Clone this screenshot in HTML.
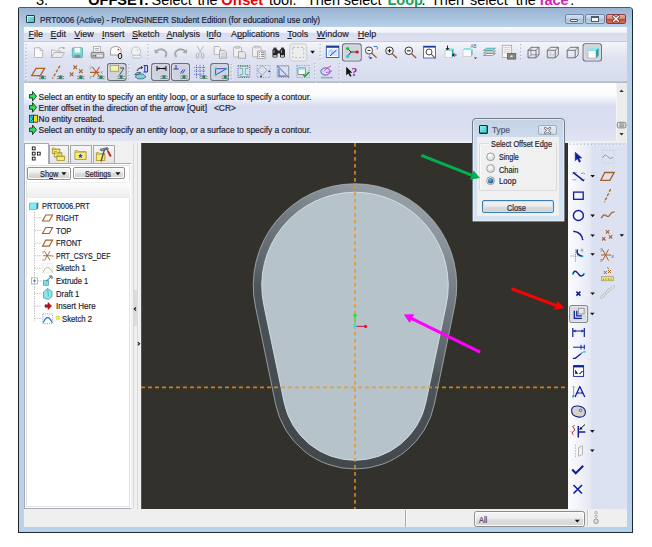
<!DOCTYPE html>
<html><head><meta charset="utf-8">
<style>
*{margin:0;padding:0;box-sizing:border-box}
html,body{width:652px;height:547px;overflow:hidden;background:#fff;font-family:"Liberation Sans",sans-serif}
.a{position:absolute}
.t{position:absolute;white-space:nowrap;line-height:10px;-webkit-text-stroke:0.18px currentColor}
#top span{position:absolute;white-space:nowrap;font-size:14.5px;line-height:14px;top:-7.4px;color:#000}
#top b{font-weight:bold}
#win{left:18px;top:7px;width:615px;height:526px;background:#b9d1ea;border:1px solid #1c2c34;border-top-color:#55595e;border-left-color:#222;border-radius:2px 4px 0 0;box-shadow:inset -1px -1px 0 #8ee4f4}
#title{left:19px;top:8px;width:613px;height:19px;background:linear-gradient(#99b4d2,#b8d0e8);border-radius:1px 3px 0 0}
.menu span{position:absolute;top:29px;font-size:9px;line-height:10px;color:#1a1a2a;-webkit-text-stroke:0.15px currentColor}
.menu u{text-decoration:underline;text-underline-offset:1px}
.msg{font-size:8.4px;color:#222;line-height:10px}
.tree span.tx{position:absolute;font-size:8.6px;line-height:10px;color:#1e1e1e;white-space:nowrap}
</style></head><body>

<!-- cropped instruction text -->
<div id="top" class="a" style="left:0;top:0;width:652px;height:7px;overflow:hidden">
<span style="left:36px">3.</span>
<span style="left:88.3px"><b>OFFSET:</b></span>
<span style="left:151.5px">Select</span>
<span style="left:197.5px">the</span>
<span style="left:221.3px;color:#e00"><b>Offset</b></span>
<span style="left:269px">tool.</span>
<span style="left:306.9px">Then</span>
<span style="left:343.7px">select</span>
<span style="left:387.5px;color:#1aa05a"><b>Loop</b></span>
<span style="left:421.5px">.</span>
<span style="left:431px">Then</span>
<span style="left:469.9px">select</span>
<span style="left:515.7px">the</span>
<span style="left:539.6px;color:#d21fb4"><b>face</b></span>
<span style="left:570.3px">.</span>
</div>

<!-- window frame -->
<div id="win" class="a"></div>
<div id="title" class="a"></div>
<div class="a" style="left:26px;top:15px;width:9px;height:8px;background:linear-gradient(135deg,#7ee8e8,#3cc6c8);border:1px solid #2a3a40;border-radius:1px;box-shadow:inset 1px 1px 0 #b8f4f4"></div>
<div class="t" style="left:39.5px;top:15.2px;font-size:9px;color:#1a2035;transform:scaleX(0.905);transform-origin:0 0">PRT0006 (Active) - Pro/ENGINEER Student Edition (for educational use only)</div>
<div class="a" style="left:565px;top:14px;width:19px;height:10px;border:1px solid #7088a4;border-radius:2px;background:linear-gradient(#d6e2ef 0%,#bccfe3 45%,#a3bcd6 50%,#c2d5e8 100%)"></div>
<div class="a" style="left:570px;top:19px;width:8px;height:3px;border:1px solid #4a5a6e;background:#f4f6f8;border-radius:1px"></div>
<div class="a" style="left:585px;top:14px;width:20px;height:10px;border:1px solid #7088a4;border-radius:2px;background:linear-gradient(#d6e2ef 0%,#bccfe3 45%,#a3bcd6 50%,#c2d5e8 100%)"></div>
<div class="a" style="left:591px;top:16px;width:8px;height:6px;border:1px solid #4a5a6e;background:#f4f6f8;border-top:2px solid #4a5a6e"></div>
<div class="a" style="left:606px;top:14px;width:20px;height:10px;border:1px solid #8a4040;border-radius:2px;background:linear-gradient(#eab0a4 0%,#d9806c 45%,#c4452e 52%,#d8735c 100%)"></div>
<svg class="a" style="left:611px;top:15px" width="10" height="8" viewBox="0 0 10 8"><path d="M2.6 1.5L7.4 6.3M7.4 1.5L2.6 6.3" stroke="#6a3030" stroke-width="2.8" stroke-linecap="round"/><path d="M2.6 1.5L7.4 6.3M7.4 1.5L2.6 6.3" stroke="#fff" stroke-width="1.5" stroke-linecap="round"/></svg>
<!-- client -->
<div class="a" style="left:24px;top:27px;width:603px;height:500px;background:#f0f0f0"></div>
<!-- menu bar -->
<div class="a" style="left:24px;top:27px;width:603px;height:14px;background:linear-gradient(#fbfbfd 0%,#f3f4f9 38%,#d8dcee 45%,#dde2f1 100%)"></div>
<div class="menu">
<span style="left:28.5px"><u>F</u>ile</span>
<span style="left:50.5px"><u>E</u>dit</span>
<span style="left:74.3px"><u>V</u>iew</span>
<span style="left:102px"><u>I</u>nsert</span>
<span style="left:132px"><u>S</u>ketch</span>
<span style="left:166.5px"><u>A</u>nalysis</span>
<span style="left:206.3px">I<u>n</u>fo</span>
<span style="left:231px">A<u>p</u>plications</span>
<span style="left:287.3px"><u>T</u>ools</span>
<span style="left:316.8px"><u>W</u>indow</span>
<span style="left:357.8px"><u>H</u>elp</span>
</div>
<!-- toolbar area -->
<div class="a" style="left:24px;top:41px;width:603px;height:41px;border-top:1px solid #c8ccd8;border-bottom:1px solid #c2c5ce;background:linear-gradient(#f5f6fb 0%,#dfe3f1 40%,#d7dcee 100%)"></div>
<!-- message area -->
<div class="a" style="left:24px;top:82px;width:603px;height:59px;border-top:1px solid #b9bcc4;background:linear-gradient(#fefefe 0%,#fbfcfd 20%,#e6e9f5 33%,#d8ddef 40%,#d8ddef 70%,#e0e4f3 100%)"></div>
<!-- graphics -->
<div class="a" style="left:141px;top:143px;width:427px;height:366px;background:#33312c;overflow:hidden">
<svg width="427" height="366" viewBox="141 143 427 366" style="position:absolute;left:0;top:0">
<defs>
<linearGradient id="ring" gradientUnits="userSpaceOnUse" x1="356.8" y1="180.4" x2="239.8" y2="411.8">
<stop offset="0" stop-color="#939da3"/><stop offset="0.19" stop-color="#788187"/><stop offset="0.29" stop-color="#6e777d"/><stop offset="0.47" stop-color="#5c646a"/><stop offset="0.54" stop-color="#4e555a"/><stop offset="0.77" stop-color="#474d52"/><stop offset="1" stop-color="#43484c"/>
</linearGradient>
</defs>
<rect x="141" y="143" width="1" height="366" fill="#55544f"/>
<path d="M255.36 306.10A101.75 101.75 0 1 1 454.64 306.10L434.32 404.40A81 81 0 0 1 275.68 404.40Z" fill="url(#ring)" stroke="#aab3b8" stroke-width="0.8"/>
<path d="M263.72 304.56A93.25 93.25 0 1 1 446.28 304.56L425.77 402.78A72.3 72.3 0 0 1 284.23 402.78Z" fill="#b7c3cb" stroke="#d9e2e8" stroke-width="0.9"/>
<line x1="355" y1="143" x2="355" y2="509" stroke="#ed941a" stroke-opacity="0.8" stroke-width="1.8" stroke-dasharray="3.7 3.3"/>
<line x1="141" y1="387.3" x2="568" y2="387.3" stroke="#ed941a" stroke-opacity="0.8" stroke-width="1.8" stroke-dasharray="4 3"/>
<line x1="355" y1="315.6" x2="355" y2="326.4" stroke="#3fe05a" stroke-width="1.2"/>
<circle cx="355" cy="315.6" r="1.8" fill="#1ee83a"/>
<line x1="356" y1="326.4" x2="365.6" y2="326.4" stroke="#e8204a" stroke-width="1.2"/>
<circle cx="365.6" cy="326.4" r="1.6" fill="#f0103a"/>
<circle cx="354.8" cy="326.4" r="1.8" fill="#20e8f0"/>
</svg>
</div>

<svg class="a" style="left:0;top:0" width="652" height="90" viewBox="0 0 652 90">
<rect x="25.5" y="44" width="1.2" height="1.2" fill="#aeb3c0"/>
<rect x="26.5" y="45.2" width="1" height="1" fill="#fff"/>
<rect x="25.5" y="47.6" width="1.2" height="1.2" fill="#aeb3c0"/>
<rect x="26.5" y="48.800000000000004" width="1" height="1" fill="#fff"/>
<rect x="25.5" y="51.2" width="1.2" height="1.2" fill="#aeb3c0"/>
<rect x="26.5" y="52.400000000000006" width="1" height="1" fill="#fff"/>
<rect x="25.5" y="54.800000000000004" width="1.2" height="1.2" fill="#aeb3c0"/>
<rect x="26.5" y="56.00000000000001" width="1" height="1" fill="#fff"/>
<rect x="25.5" y="58.400000000000006" width="1.2" height="1.2" fill="#aeb3c0"/>
<rect x="26.5" y="59.60000000000001" width="1" height="1" fill="#fff"/>
<rect x="25.5" y="62.00000000000001" width="1.2" height="1.2" fill="#aeb3c0"/>
<rect x="26.5" y="63.20000000000001" width="1" height="1" fill="#fff"/>
<rect x="25.5" y="65.60000000000001" width="1.2" height="1.2" fill="#aeb3c0"/>
<rect x="26.5" y="66.80000000000001" width="1" height="1" fill="#fff"/>
<rect x="25.5" y="69.2" width="1.2" height="1.2" fill="#aeb3c0"/>
<rect x="26.5" y="70.4" width="1" height="1" fill="#fff"/>
<rect x="25.5" y="72.8" width="1.2" height="1.2" fill="#aeb3c0"/>
<rect x="26.5" y="74.0" width="1" height="1" fill="#fff"/>
<rect x="25.5" y="76.39999999999999" width="1.2" height="1.2" fill="#aeb3c0"/>
<rect x="26.5" y="77.6" width="1" height="1" fill="#fff"/>
<rect x="25.5" y="79.99999999999999" width="1.2" height="1.2" fill="#aeb3c0"/>
<rect x="26.5" y="81.19999999999999" width="1" height="1" fill="#fff"/>
<path d="M34.5 47.8h5.5l2.7 2.7v7h-8.2z" fill="#fafafa" stroke="#b4b4b4" stroke-width="0.9"/>
<path d="M40 47.8v2.7h2.7" fill="none" stroke="#b4b4b4" stroke-width="0.8"/>
<path d="M51.5 57.5v-7.5h3l1 1h5v1.5" fill="#f4f4f4" stroke="#b0b0b0" stroke-width="0.9"/>
<path d="M51.5 57.5l2.5-5h10.5l-3 5z" fill="#ececec" stroke="#b0b0b0" stroke-width="0.9"/>
<path d="M58 49.5c1.5-2 4-2.5 5.5-1.5" fill="none" stroke="#b0b0b0" stroke-width="0.9"/><circle cx="63.8" cy="48" r="0.9" fill="#a0a0a0"/>
<rect x="72.3" y="47.8" width="10.2" height="9.8" rx="0.8" fill="#6fdcdc" stroke="#5a9a9a" stroke-width="0.7"/>
<rect x="74.6" y="48" width="5.6" height="4.6" fill="#fafafa"/>
<rect x="74.3" y="55" width="6.2" height="2.5" fill="#8a8a8a"/>
<rect x="93.5" y="46.4" width="6.8" height="6" fill="#fff" stroke="#9a9a9a" stroke-width="0.7"/>
<path d="M94.8 48.5h4.2M94.8 50.2h4.2" stroke="#777" stroke-width="0.6"/>
<rect x="91.2" y="52.3" width="12.6" height="5.7" rx="1" fill="#c4c4c4" stroke="#6a6a6a" stroke-width="0.8"/>
<rect x="92.4" y="55" width="1.6" height="1.6" fill="#30c030"/><rect x="94.6" y="55" width="1.6" height="1.6" fill="#e02a2a"/><rect x="96.8" y="55" width="6" height="1.6" fill="#eaeaea"/>
<path d="M110.5 50.5q0-3.5 3.5-3.8h3.5q3.5.3 3.5 3.8v4.5h-10.5z" fill="#fff" stroke="#8a8a8a" stroke-width="0.8"/>
<circle cx="118.4" cy="49.6" r="0.9" fill="#e02020"/>
<ellipse cx="120" cy="56" rx="1.8" ry="2.8" fill="#ddd" stroke="#222" stroke-width="1"/>
<circle cx="136" cy="51.5" r="4.6" fill="#f2f3f6" stroke="#b8b8b8" stroke-width="0.8"/>
<ellipse cx="137" cy="56.6" rx="5" ry="1.5" fill="#f2f3f6" stroke="#b0b0b0" stroke-width="0.8"/><circle cx="137.5" cy="50" r="0.6" fill="#999"/>
<rect x="147.5" y="44" width="1.2" height="1.2" fill="#aeb3c0"/>
<rect x="148.5" y="45.2" width="1" height="1" fill="#fff"/>
<rect x="147.5" y="47.6" width="1.2" height="1.2" fill="#aeb3c0"/>
<rect x="148.5" y="48.800000000000004" width="1" height="1" fill="#fff"/>
<rect x="147.5" y="51.2" width="1.2" height="1.2" fill="#aeb3c0"/>
<rect x="148.5" y="52.400000000000006" width="1" height="1" fill="#fff"/>
<rect x="147.5" y="54.800000000000004" width="1.2" height="1.2" fill="#aeb3c0"/>
<rect x="148.5" y="56.00000000000001" width="1" height="1" fill="#fff"/>
<rect x="147.5" y="58.400000000000006" width="1.2" height="1.2" fill="#aeb3c0"/>
<rect x="148.5" y="59.60000000000001" width="1" height="1" fill="#fff"/>
<path d="M155.5 51.5q5.5-4.5 10 -0.2q2 3 -0.5 5.8" fill="none" stroke="#a8a8a8" stroke-width="1.8"/>
<path d="M154.3 49.3l0.6 4.5 4.2-1.2z" fill="#a8a8a8"/>
<path d="M186 51.5q-5.5-4.5 -10 -0.2q-2 3 0.5 5.8" fill="none" stroke="#a8a8a8" stroke-width="1.8"/>
<path d="M187.3 49.3l-0.6 4.5 -4.2-1.2z" fill="#a8a8a8"/>
<path d="M197.2 46.2l4.5 7.5M203.5 46.2l-4.5 7.5" stroke="#b0b0b0" stroke-width="0.9"/>
<rect x="196.3" y="53.5" width="2.5" height="4.5" rx="1.2" fill="none" stroke="#a8a8a8" stroke-width="0.9"/><rect x="201.3" y="53.5" width="2.5" height="4.5" rx="1.2" fill="none" stroke="#a8a8a8" stroke-width="0.9"/>
<path d="M214.2 46.5h4.5l1.8 1.8v6.3h-6.3z" fill="#f4f4f4" stroke="#aaa" stroke-width="0.8"/>
<path d="M219.5 50.3h4.8l2 2v5.8h-6.8z" fill="#e8e8e8" stroke="#999" stroke-width="0.8"/>
<path d="M221 53.5h4M221 55h4M221 56.5h4" stroke="#b8b8b8" stroke-width="0.6"/>
<rect x="233.5" y="47.2" width="8" height="9.8" rx="0.8" fill="#f0f0f0" stroke="#aaa" stroke-width="0.8"/>
<rect x="235.8" y="46.2" width="3.4" height="2" fill="#ddd" stroke="#aaa" stroke-width="0.6"/>
<path d="M238.5 51.6h5l2 2v4.6h-7z" fill="#e8e8e8" stroke="#999" stroke-width="0.8"/>
<rect x="252.6" y="46.8" width="8.5" height="10" rx="0.8" fill="#f0f0f0" stroke="#aaa" stroke-width="0.8"/>
<rect x="255" y="46" width="3.6" height="2" fill="#ddd" stroke="#aaa" stroke-width="0.6"/>
<rect x="257.6" y="51" width="7.5" height="7.4" fill="#f2f2f2" stroke="#999" stroke-width="0.8"/>
<path d="M258.8 52.6h1M261.2 52.6h3M258.8 54.5h1M261.2 54.5h3M258.8 56.4h1M261.2 56.4h3" stroke="#666" stroke-width="0.8"/>
<rect x="272.5" y="49" width="5" height="8.5" rx="1.2" fill="#222"/><rect x="280" y="49" width="5" height="8.5" rx="1.2" fill="#222"/>
<rect x="273.5" y="47.6" width="3" height="2" fill="#333"/><rect x="281" y="47.6" width="3" height="2" fill="#333"/><rect x="276.8" y="50.5" width="4" height="3" fill="#2a2a2a"/>
<rect x="273.4" y="55.2" width="3.2" height="1.6" fill="#ddd"/><rect x="280.9" y="55.2" width="3.2" height="1.6" fill="#ddd"/><rect x="273.5" y="50" width="1" height="3" fill="#999"/><rect x="281" y="50" width="1" height="3" fill="#999"/>
<rect x="289.8" y="43.8" width="17" height="17.2" rx="2.5" fill="#eeeeef" stroke="#c4c6cc" stroke-width="0.9"/>
<rect x="292.8" y="47.3" width="11" height="10.4" fill="none" stroke="#b0b0b0" stroke-width="0.9" stroke-dasharray="2.2 1.8"/>
<path d="M310.3 50.8h4.6l-2.3 3z" fill="#111"/>
<rect x="319.5" y="44" width="1.2" height="1.2" fill="#aeb3c0"/>
<rect x="320.5" y="45.2" width="1" height="1" fill="#fff"/>
<rect x="319.5" y="47.6" width="1.2" height="1.2" fill="#aeb3c0"/>
<rect x="320.5" y="48.800000000000004" width="1" height="1" fill="#fff"/>
<rect x="319.5" y="51.2" width="1.2" height="1.2" fill="#aeb3c0"/>
<rect x="320.5" y="52.400000000000006" width="1" height="1" fill="#fff"/>
<rect x="319.5" y="54.800000000000004" width="1.2" height="1.2" fill="#aeb3c0"/>
<rect x="320.5" y="56.00000000000001" width="1" height="1" fill="#fff"/>
<rect x="319.5" y="58.400000000000006" width="1.2" height="1.2" fill="#aeb3c0"/>
<rect x="320.5" y="59.60000000000001" width="1" height="1" fill="#fff"/>
<rect x="326.3" y="46" width="12.6" height="11.5" fill="#fff" stroke="#2a50b0" stroke-width="0.9"/>
<rect x="326.3" y="46" width="12.6" height="1.8" fill="#1e3c9a"/>
<path d="M328 49.5h9.5v6.5h-9.5z" fill="#cfe4f6"/><path d="M330 56l6.5-6" stroke="#2040c0" stroke-width="1"/><path d="M329.3 51l3 -1.5M331 53l2.5-1.4" stroke="#7aaee0" stroke-width="0.8"/>
<rect x="342.5" y="43.9" width="18.69999999999999" height="17.1" rx="2.2" fill="#cfd3de" stroke="#6a7079" stroke-width="1.1"/>
<rect x="343.6" y="45.0" width="16.49999999999999" height="14.900000000000002" rx="1.5" fill="none" stroke="#e2e5ee" stroke-width="0.8"/>
<path d="M347.6 48.6l3.4 3.4h6M351 52l-3.4 4.4" fill="none" stroke="#222" stroke-width="0.9"/>
<circle cx="347.6" cy="48.6" r="1.6" fill="#22c030"/><circle cx="357.2" cy="52" r="1.6" fill="#e01010"/><circle cx="347.6" cy="56.4" r="1.6" fill="#20d0d8"/>
<circle cx="369" cy="50.5" r="3.6" fill="#f6f6f6" stroke="#333" stroke-width="0.9"/><path d="M367.6 50.5h2.8" stroke="#222" stroke-width="0.9"/>
<path d="M371.8 53.2l4.8 4.6" stroke="#9a5a30" stroke-width="1.2"/>
<path d="M373.5 46.5h3.5q1 1.5 0 3M370 55.5q-2 1.5 -0.5 3" fill="none" stroke="#3a6ad0" stroke-width="0.9"/><circle cx="370.8" cy="58" r="1" fill="#1a3ac0"/>
<circle cx="389.5" cy="50.8" r="3.8" fill="#fafafa" stroke="#222" stroke-width="0.9"/><path d="M387.7 50.8h3.6M389.5 49v3.6" stroke="#111" stroke-width="1"/>
<path d="M392.2 53.6l4.6 4.4" stroke="#9a5030" stroke-width="1.3"/>
<circle cx="408.8" cy="50.8" r="3.8" fill="#fafafa" stroke="#222" stroke-width="0.9"/><path d="M407 50.8h3.6" stroke="#111" stroke-width="1"/>
<path d="M411.5 53.6l4.6 4.4" stroke="#9a5030" stroke-width="1.3"/>
<rect x="423.6" y="46.2" width="11.8" height="11.8" fill="#fff" stroke="#3a60c0" stroke-width="0.9"/><rect x="423.6" y="46" width="11.8" height="1.6" fill="#1e3a9a"/>
<circle cx="429" cy="52" r="3" fill="none" stroke="#333" stroke-width="0.9"/><path d="M431.2 54.2l4.2 4.2" stroke="#9a5030" stroke-width="1.2"/>
<path d="M445 50.5h7v7h-7z" fill="#fafafa" stroke="#b8b8b8" stroke-width="0.6"/><path d="M445 50.5l2-2h6.5l-1.5 2z" fill="#6ee0e0"/><path d="M452 50.5l1.5-2v7l-1.5 2z" fill="#22a8a8"/>
<path d="M447.5 45.5v4M446 48l1.5 2 1.5-2M456.5 55h-4M454.5 53.5l-2 1.5 2 1.5" fill="none" stroke="#111" stroke-width="0.9"/>
<path d="M463 49.5h8.5v7h-8.5z" fill="#fafafa" stroke="#bbb" stroke-width="0.6"/><path d="M463 49.5l1.5-1.5h7l-1 1.5z" fill="#7ee4e4"/><path d="M471.5 50v6l1-1.2v-5.5z" fill="#30b0b0"/>
<text x="470.5" y="48" font-size="4.6" fill="#666" font-family="Liberation Sans">AB</text><path d="M474 57.5h3l-1.5 1.5z" fill="#222"/>
<path d="M483.5 55.5l3-2h9l-3 2z" fill="#f6f6f6" stroke="#777" stroke-width="0.7"/><path d="M483.5 53l3-2h9l-3 2z" fill="#f4f4f4" stroke="#777" stroke-width="0.7"/><path d="M483.5 50.5l3-2.3h9l-3 2.3z" fill="#6ee0e0" stroke="#4a9a9a" stroke-width="0.7"/>
<rect x="502.2" y="45.3" width="9.5" height="12" fill="#fafafa" stroke="#999" stroke-width="0.7"/><path d="M503.5 47.5h7M503.5 49.3h7M503.5 51.1h7M503.5 52.9h7" stroke="#aaa" stroke-width="0.5"/>
<rect x="507.3" y="53.5" width="8.5" height="5.6" fill="#8a8a82" stroke="#444" stroke-width="0.6"/><rect x="510" y="55" width="3" height="2.6" fill="#eee" stroke="#333" stroke-width="0.4"/>
<rect x="520.0" y="44" width="1.2" height="1.2" fill="#aeb3c0"/>
<rect x="521.0" y="45.2" width="1" height="1" fill="#fff"/>
<rect x="520.0" y="47.6" width="1.2" height="1.2" fill="#aeb3c0"/>
<rect x="521.0" y="48.800000000000004" width="1" height="1" fill="#fff"/>
<rect x="520.0" y="51.2" width="1.2" height="1.2" fill="#aeb3c0"/>
<rect x="521.0" y="52.400000000000006" width="1" height="1" fill="#fff"/>
<rect x="520.0" y="54.800000000000004" width="1.2" height="1.2" fill="#aeb3c0"/>
<rect x="521.0" y="56.00000000000001" width="1" height="1" fill="#fff"/>
<rect x="520.0" y="58.400000000000006" width="1.2" height="1.2" fill="#aeb3c0"/>
<rect x="521.0" y="59.60000000000001" width="1" height="1" fill="#fff"/>
<path d="M528 50.3h8v7.5h-8z" fill="none" stroke="#555" stroke-width="0.8"/>
<path d="M528 50.3l3-3h8l-3 3M539 47.3v7.5l-3 3" fill="none" stroke="#555" stroke-width="0.8"/>
<path d="M531 47.3v7.5h8M531 54.8l-3 3" fill="none" stroke="#777" stroke-width="0.7"/>
<path d="M547.3 50.3h8v7.5h-8z" fill="none" stroke="#555" stroke-width="0.8"/>
<path d="M547.3 50.3l3-3h8l-3 3M558.3 47.3v7.5l-3 3" fill="none" stroke="#555" stroke-width="0.8"/>
<path d="M550.3 47.3v7.5h8M550.3 54.8l-3 3" fill="none" stroke="#bbb" stroke-width="0.7"/>
<path d="M567.2 50.3h8v7.5h-8z" fill="none" stroke="#555" stroke-width="0.8"/>
<path d="M567.2 50.3l3-3h8l-3 3M578.2 47.3v7.5l-3 3" fill="none" stroke="#555" stroke-width="0.8"/>
<rect x="583.1" y="43.8" width="18.299999999999955" height="17.200000000000003" rx="2.2" fill="#cfd3de" stroke="#6a7079" stroke-width="1.1"/>
<rect x="584.2" y="44.9" width="16.099999999999955" height="15.000000000000004" rx="1.5" fill="none" stroke="#e2e5ee" stroke-width="0.8"/>
<path d="M588 50.5h8v7.5h-8z" fill="#fff" stroke="#999" stroke-width="0.5"/><path d="M588 50.5l2.6-2.6h8l-2.6 2.6z" fill="#7ff0f0"/><path d="M596 50.5l2.6-2.6v7.5l-2.6 2.6z" fill="#2aa0a0"/>
<path d="M36 68.4h8.6l-4.3 7.3h-8.6z" fill="none" stroke="#b0601e" stroke-width="1.3"/>
<ellipse cx="42.5" cy="77.3" rx="3.4" ry="1.5" fill="#dcdcd4"/>
<path d="M38.9 76.7q3.6-2.2 7.2 0M38.9 78.7h7.2" fill="none" stroke="#6e6e6e" stroke-width="0.8"/>
<circle cx="42.5" cy="77.3" r="1.6" fill="#0c8a72"/>
<path d="M59.9 65.7l-7.4 12.9" stroke="#b0601e" stroke-width="1.3" stroke-dasharray="3 1.6"/>
<ellipse cx="60.5" cy="77.3" rx="3.4" ry="1.5" fill="#dcdcd4"/>
<path d="M56.9 76.7q3.6-2.2 7.2 0M56.9 78.7h7.2" fill="none" stroke="#6e6e6e" stroke-width="0.8"/>
<circle cx="60.5" cy="77.3" r="1.6" fill="#0c8a72"/>
<path d="M73.4 65.4l3.6 3.6M77.0 65.4l-3.6 3.6" stroke="#b0601e" stroke-width="1.1"/>
<path d="M69.8 72.5l3.6 3.6M73.39999999999999 72.5l-3.6 3.6" stroke="#b0601e" stroke-width="1.1"/>
<path d="M79.0 69.4l3.6 3.6M82.6 69.4l-3.6 3.6" stroke="#b0601e" stroke-width="1.1"/>
<ellipse cx="80.8" cy="77.3" rx="3.4" ry="1.5" fill="#dcdcd4"/>
<path d="M77.2 76.7q3.6-2.2 7.2 0M77.2 78.7h7.2" fill="none" stroke="#6e6e6e" stroke-width="0.8"/>
<circle cx="80.8" cy="77.3" r="1.6" fill="#0c8a72"/>
<path d="M90 72.4h9.5M92.5 67l7 9.5M99.5 67l-6.5 10" stroke="#b0601e" stroke-width="1.1"/>
<text x="89.5" y="68.5" font-size="4.5" fill="#888" font-family="Liberation Sans">y</text><text x="89.5" y="78.5" font-size="4.5" fill="#888" font-family="Liberation Sans">z</text><text x="100.5" y="73.5" font-size="4.5" fill="#888" font-family="Liberation Sans">x</text>
<ellipse cx="101" cy="77.3" rx="3.4" ry="1.5" fill="#dcdcd4"/>
<path d="M97.4 76.7q3.6-2.2 7.2 0M97.4 78.7h7.2" fill="none" stroke="#6e6e6e" stroke-width="0.8"/>
<circle cx="101" cy="77.3" r="1.6" fill="#0c8a72"/>
<rect x="107.6" y="63.6" width="18.400000000000006" height="16.800000000000004" rx="2.2" fill="#cfd3de" stroke="#6a7079" stroke-width="1.1"/>
<rect x="108.69999999999999" y="64.7" width="16.200000000000006" height="14.600000000000005" rx="1.5" fill="none" stroke="#e2e5ee" stroke-width="0.8"/>
<rect x="110.2" y="65.3" width="8.5" height="5.9" fill="#f6f2a8" stroke="#8a8a60" stroke-width="0.7"/>
<path d="M120 68h4l-4.5 7" fill="none" stroke="#333" stroke-width="0.8"/>
<ellipse cx="121.1" cy="77.1" rx="3.4" ry="1.5" fill="#dcdcd4"/>
<path d="M117.5 76.5q3.6-2.2 7.2 0M117.5 78.5h7.2" fill="none" stroke="#6e6e6e" stroke-width="0.8"/>
<circle cx="121.1" cy="77.1" r="1.6" fill="#0c8a72"/>
<rect x="128.3" y="64" width="1.2" height="1.2" fill="#aeb3c0"/>
<rect x="129.3" y="65.2" width="1" height="1" fill="#fff"/>
<rect x="128.3" y="67.6" width="1.2" height="1.2" fill="#aeb3c0"/>
<rect x="129.3" y="68.8" width="1" height="1" fill="#fff"/>
<rect x="128.3" y="71.19999999999999" width="1.2" height="1.2" fill="#aeb3c0"/>
<rect x="129.3" y="72.39999999999999" width="1" height="1" fill="#fff"/>
<rect x="128.3" y="74.79999999999998" width="1.2" height="1.2" fill="#aeb3c0"/>
<rect x="129.3" y="75.99999999999999" width="1" height="1" fill="#fff"/>
<rect x="128.3" y="78.39999999999998" width="1.2" height="1.2" fill="#aeb3c0"/>
<rect x="129.3" y="79.59999999999998" width="1" height="1" fill="#fff"/>
<path d="M143.5 65.5h4v6.5h-4M144.8 65.5v6.5" fill="none" stroke="#2030d0" stroke-width="1"/>
<path d="M137 71q1-3.5 5-3.5" fill="none" stroke="#111" stroke-width="0.9"/><path d="M141 66l2 1.5-2 1.5z" fill="#111"/>
<path d="M134.5 74.5l2.5-2h4l-2.5 2z M135 76.5l3-2.5h5l3 2.8-3 2h-5z" fill="#70d8e0" stroke="#404860" stroke-width="0.7"/>
<rect x="151.7" y="63.6" width="17.80000000000001" height="16.800000000000004" rx="2.2" fill="#cfd3de" stroke="#6a7079" stroke-width="1.1"/>
<rect x="152.79999999999998" y="64.7" width="15.600000000000012" height="14.600000000000005" rx="1.5" fill="none" stroke="#e2e5ee" stroke-width="0.8"/>
<path d="M157 68.5h9M157 66v5M166 66v5" fill="none" stroke="#111" stroke-width="1"/><path d="M157.3 68.5l2-1.3v2.6zM165.7 68.5l-2-1.3v2.6z" fill="#111"/>
<ellipse cx="164" cy="77.1" rx="3.4" ry="1.5" fill="#dcdcd4"/>
<path d="M160.4 76.5q3.6-2.2 7.2 0M160.4 78.5h7.2" fill="none" stroke="#6e6e6e" stroke-width="0.8"/>
<circle cx="164" cy="77.1" r="1.6" fill="#0c8a72"/>
<rect x="171.5" y="63.6" width="17.900000000000006" height="16.800000000000004" rx="2.2" fill="#cfd3de" stroke="#6a7079" stroke-width="1.1"/>
<rect x="172.6" y="64.7" width="15.700000000000006" height="14.600000000000005" rx="1.5" fill="none" stroke="#e2e5ee" stroke-width="0.8"/>
<path d="M173.5 69h5M176 65v4" stroke="#2030c0" stroke-width="1"/><path d="M180.5 73.5l2.5-4M182.5 73.5l2.5-4" stroke="#2030c0" stroke-width="0.9"/>
<ellipse cx="184" cy="77" rx="3.4" ry="1.5" fill="#dcdcd4"/>
<path d="M180.4 76.4q3.6-2.2 7.2 0M180.4 78.4h7.2" fill="none" stroke="#6e6e6e" stroke-width="0.8"/>
<circle cx="184" cy="77" r="1.6" fill="#0c8a72"/>
<path d="M196.5 65v13M200 65v13M203.5 65v10M194.2 67.5h11M194.2 71h11M194.2 74.5h8" stroke="#4a60c8" stroke-width="0.8" stroke-dasharray="1.2 0.8"/>
<ellipse cx="203.8" cy="77" rx="3.4" ry="1.5" fill="#dcdcd4"/>
<path d="M200.20000000000002 76.4q3.6-2.2 7.2 0M200.20000000000002 78.4h7.2" fill="none" stroke="#6e6e6e" stroke-width="0.8"/>
<circle cx="203.8" cy="77" r="1.6" fill="#0c8a72"/>
<rect x="210.8" y="63.6" width="17.69999999999999" height="16.800000000000004" rx="2.2" fill="#cfd3de" stroke="#6a7079" stroke-width="1.1"/>
<rect x="211.9" y="64.7" width="15.49999999999999" height="14.600000000000005" rx="1.5" fill="none" stroke="#e2e5ee" stroke-width="0.8"/>
<path d="M215.6 68.7h10.8l-10.8 6.3z" fill="none" stroke="#2840c0" stroke-width="0.9"/>
<rect x="214.6" y="67.7" width="2" height="2" fill="#20c8e8"/><rect x="225.4" y="67.7" width="2" height="2" fill="#20c8e8"/><rect x="214.6" y="74" width="2" height="2" fill="#20c8e8"/>
<ellipse cx="225.3" cy="77" rx="3.4" ry="1.5" fill="#dcdcd4"/>
<path d="M221.70000000000002 76.4q3.6-2.2 7.2 0M221.70000000000002 78.4h7.2" fill="none" stroke="#6e6e6e" stroke-width="0.8"/>
<circle cx="225.3" cy="77" r="1.6" fill="#0c8a72"/>
<rect x="230.7" y="64" width="1.2" height="1.2" fill="#aeb3c0"/>
<rect x="231.7" y="65.2" width="1" height="1" fill="#fff"/>
<rect x="230.7" y="67.6" width="1.2" height="1.2" fill="#aeb3c0"/>
<rect x="231.7" y="68.8" width="1" height="1" fill="#fff"/>
<rect x="230.7" y="71.19999999999999" width="1.2" height="1.2" fill="#aeb3c0"/>
<rect x="231.7" y="72.39999999999999" width="1" height="1" fill="#fff"/>
<rect x="230.7" y="74.79999999999998" width="1.2" height="1.2" fill="#aeb3c0"/>
<rect x="231.7" y="75.99999999999999" width="1" height="1" fill="#fff"/>
<rect x="230.7" y="78.39999999999998" width="1.2" height="1.2" fill="#aeb3c0"/>
<rect x="231.7" y="79.59999999999998" width="1" height="1" fill="#fff"/>
<rect x="238" y="65.5" width="11.8" height="12" fill="none" stroke="#3a5ac8" stroke-width="0.9" stroke-dasharray="1.1 1.1"/>
<path d="M240 66.5h8v2h-2.6v6h2.6v2h-8v-2h2.6v-6h-2.6z" fill="#bff0ec" stroke="#5a8a88" stroke-width="0.6"/>
<rect x="257" y="65.5" width="13" height="12" fill="none" stroke="#6a80d8" stroke-width="0.8" stroke-dasharray="1 1.6"/>
<path d="M262 65.5l5.2 4.5-5.2 5.5-4.8-5z" fill="none" stroke="#a0a0a0" stroke-width="0.9"/><circle cx="269.2" cy="71.3" r="0.9" fill="#1a30b0"/><circle cx="261" cy="76.5" r="0.9" fill="#1a30b0"/>
<rect x="278" y="66" width="10.5" height="10.5" fill="none" stroke="#a0a0a0" stroke-width="0.8"/><rect x="277" y="65.5" width="12" height="12" fill="none" stroke="#6a80d8" stroke-width="0.7" stroke-dasharray="1 1.4"/>
<path d="M277 65.5l12 12.2" stroke="#2a60e0" stroke-width="1"/><path d="M279 69v7h7" fill="none" stroke="#2a50c0" stroke-width="0.8"/>
<rect x="296.8" y="65.5" width="12.5" height="12" fill="none" stroke="#5a70d0" stroke-width="0.7" stroke-dasharray="1 1.4"/>
<rect x="298" y="68" width="7.5" height="6.5" fill="#fafafa" stroke="#5a6a6a" stroke-width="0.7"/><path d="M298 68h7.5v1.5h-7.5z" fill="#8cd8d8"/>
<path d="M303 74.5l2 2 4-4.5" fill="none" stroke="#10a030" stroke-width="1.4"/>
<rect x="314.1" y="63" width="1.2" height="1.2" fill="#aeb3c0"/>
<rect x="315.1" y="64.2" width="1" height="1" fill="#fff"/>
<rect x="314.1" y="66.6" width="1.2" height="1.2" fill="#aeb3c0"/>
<rect x="315.1" y="67.8" width="1" height="1" fill="#fff"/>
<rect x="314.1" y="70.19999999999999" width="1.2" height="1.2" fill="#aeb3c0"/>
<rect x="315.1" y="71.39999999999999" width="1" height="1" fill="#fff"/>
<rect x="314.1" y="73.79999999999998" width="1.2" height="1.2" fill="#aeb3c0"/>
<rect x="315.1" y="74.99999999999999" width="1" height="1" fill="#fff"/>
<rect x="314.1" y="77.39999999999998" width="1.2" height="1.2" fill="#aeb3c0"/>
<rect x="315.1" y="78.59999999999998" width="1" height="1" fill="#fff"/>
<rect x="314.1" y="80.99999999999997" width="1.2" height="1.2" fill="#aeb3c0"/>
<rect x="315.1" y="82.19999999999997" width="1" height="1" fill="#fff"/>
<ellipse cx="325.5" cy="71.5" rx="4.6" ry="3.6" fill="none" stroke="#3050c0" stroke-width="0.9"/>
<path d="M324 71.5q2-4 7-5.5M326 72.5q3 0 6-1.8" fill="none" stroke="#e040d0" stroke-width="1"/><path d="M321 77.8h12" stroke="#888" stroke-width="0.8"/><path d="M322 76.5v1.3M325 76.5v1.3M328 76.5v1.3M331 76.5v1.3" stroke="#888" stroke-width="0.6"/>
<rect x="338.5" y="63" width="1.2" height="1.2" fill="#aeb3c0"/>
<rect x="339.5" y="64.2" width="1" height="1" fill="#fff"/>
<rect x="338.5" y="66.6" width="1.2" height="1.2" fill="#aeb3c0"/>
<rect x="339.5" y="67.8" width="1" height="1" fill="#fff"/>
<rect x="338.5" y="70.19999999999999" width="1.2" height="1.2" fill="#aeb3c0"/>
<rect x="339.5" y="71.39999999999999" width="1" height="1" fill="#fff"/>
<rect x="338.5" y="73.79999999999998" width="1.2" height="1.2" fill="#aeb3c0"/>
<rect x="339.5" y="74.99999999999999" width="1" height="1" fill="#fff"/>
<rect x="338.5" y="77.39999999999998" width="1.2" height="1.2" fill="#aeb3c0"/>
<rect x="339.5" y="78.59999999999998" width="1" height="1" fill="#fff"/>
<rect x="338.5" y="80.99999999999997" width="1.2" height="1.2" fill="#aeb3c0"/>
<rect x="339.5" y="82.19999999999997" width="1" height="1" fill="#fff"/>
<path d="M346.2 66.8v8.6l2-2 2 3.4 1.4-.8-2-3.3h2.8z" fill="#111"/>
<text x="351.6" y="76" font-size="11.5" font-weight="bold" fill="#9a1a9a" font-family="Liberation Serif">?</text>
</svg>

<div class="t" style="left:38.6px;top:91.6px;font-size:8.4px;color:#23202e">Select an entity to specify an entity loop, or a surface to specify a contour.</div>
<div class="t" style="left:38.6px;top:102.7px;font-size:8.4px;color:#23202e">Enter offset in the direction of the arrow [Quit]&nbsp;&nbsp; &lt;CR&gt;</div>
<div class="t" style="left:38.6px;top:113.9px;font-size:8.4px;color:#23202e">No entity created.</div>
<div class="t" style="left:38.6px;top:125.1px;font-size:8.4px;color:#23202e">Select an entity to specify an entity loop, or a surface to specify a contour.</div>
<svg class="a" style="left:0;top:80px" width="60" height="60" viewBox="0 80 60 60">
<path d="M29.5 94.5h3v-3l4 4.8-4 4.8v-3h-3z" fill="#2ae060" stroke="#103a18" stroke-width="0.9" stroke-linejoin="round"/>
<path d="M29.5 105.60000000000001h3v-3l4 4.8-4 4.8v-3h-3z" fill="#2ae060" stroke="#103a18" stroke-width="0.9" stroke-linejoin="round"/>
<path d="M29.5 128.0h3v-3l4 4.8-4 4.8v-3h-3z" fill="#2ae060" stroke="#103a18" stroke-width="0.9" stroke-linejoin="round"/>
<rect x="29.5" y="115.2" width="4" height="7" fill="#20e0f0" stroke="#111" stroke-width="0.7"/>
<rect x="33.5" y="115.2" width="4" height="7" fill="#f0e010" stroke="#111" stroke-width="0.7"/>
<path d="M31 116.5l2.2 2.2-2.2 2.3" fill="none" stroke="#111" stroke-width="0.8"/>
</svg>
<div class="a" style="left:616px;top:83px;width:11px;height:58px;background:#ececec;border-left:1px solid #f4f4f4"></div>
<svg class="a" style="left:616px;top:83px" width="11" height="58" viewBox="616 83 11 58">
<path d="M619.3 92h4.4l-2.2-2.5z" fill="#333"/>
<path d="M619.3 133h4.4l-2.2 2.5z" fill="#333"/>
<rect x="617.3" y="122.3" width="8.6" height="5.6" rx="1.5" fill="#e8e8e8" stroke="#6a6a6a" stroke-width="0.8"/><path d="M619.3 123.9h5M619.3 125.1h5M619.3 126.3h5" stroke="#555" stroke-width="0.6"/>
</svg>

<div class="a" style="left:49px;top:144.6px;width:20.4px;height:19px;border:1px solid #a6a8ad;border-bottom:none;border-radius:1px 1px 0 0;background:linear-gradient(#f6f6f6,#e4e4e6)"></div>
<div class="a" style="left:70.2px;top:144.6px;width:22.0px;height:19px;border:1px solid #a6a8ad;border-bottom:none;border-radius:1px 1px 0 0;background:linear-gradient(#f6f6f6,#e4e4e6)"></div>
<div class="a" style="left:93px;top:144.6px;width:21.7px;height:19px;border:1px solid #a6a8ad;border-bottom:none;border-radius:1px 1px 0 0;background:linear-gradient(#f6f6f6,#e4e4e6)"></div>
<div class="a" style="left:24px;top:163px;width:107.5px;height:346px;background:#fff;border:1px solid #a9abb0;box-shadow:inset 0 0 0 1px #fff,inset 0 0 0 2px #e2e2e6"></div>
<div class="a" style="left:24px;top:143px;width:25px;height:21px;background:#fff;border:1px solid #a9abb0;border-bottom:none;border-radius:1px 1px 0 0"></div>
<div class="a" style="left:27px;top:166.7px;width:43.8px;height:12.9px;border:1px solid #8f9196;border-radius:2px;background:linear-gradient(#fafafa 0%,#ececec 48%,#dcdcdc 52%,#d2d2d2 100%);box-shadow:inset 0 0 0 1px #fbfbfb"></div>
<div class="t" style="left:39.5px;top:169.0px;font-size:8.6px;color:#2a2535;transform:scaleX(0.855);transform-origin:0 0">Sh<u style="text-underline-offset:1px">o</u>w</div>
<svg class="a" style="left:61.2px;top:171.7px" width="6" height="4" viewBox="0 0 6 4"><path d="M0.3 0.3h5.2l-2.6 3z" fill="#1a1010"/></svg>
<div class="a" style="left:73.1px;top:166.8px;width:51.5px;height:12.5px;border:1px solid #8f9196;border-radius:2px;background:linear-gradient(#fafafa 0%,#ececec 48%,#dcdcdc 52%,#d2d2d2 100%);box-shadow:inset 0 0 0 1px #fbfbfb"></div>
<div class="t" style="left:85.3px;top:169.1px;font-size:8.6px;color:#2a2535;transform:scaleX(0.83);transform-origin:0 0">Setti<u style="text-underline-offset:1px">n</u>gs</div>
<svg class="a" style="left:114.6px;top:171.8px" width="6" height="4" viewBox="0 0 6 4"><path d="M0.3 0.3h5.2l-2.6 3z" fill="#1a1010"/></svg>
<div class="a" style="left:26.5px;top:181.5px;width:103px;height:16px;background:linear-gradient(#fdfdfd,#ececec);border-top:1px solid #f0f0f0"></div>
<div class="a" style="left:131px;top:143px;width:10px;height:366px;background:#f0f0f0"></div>
<div class="a" style="left:132.6px;top:143px;width:1.2px;height:366px;background:#cbdcee"></div>
<div class="a" style="left:136.5px;top:143px;width:1.2px;height:366px;background:#cbdcee"></div>
<div class="a" style="left:133.5px;top:290px;width:4px;height:36px;background:#dcdcdc"></div>
<svg class="a" style="left:131px;top:300px" width="10" height="50" viewBox="131 300 10 50"><path d="M136 307.5l-1.8 1.6 1.8 1.6" fill="none" stroke="#111" stroke-width="1.1"/><path d="M137.8 342.2l1.8 1.6-1.8 1.6" fill="none" stroke="#111" stroke-width="1.1"/></svg>
<div class="t" style="left:42.1px;top:200.5px;font-size:8.7px;color:#221e2e;transform:scaleX(0.851);transform-origin:0 0">PRT0006.PRT</div>
<div class="t" style="left:56px;top:213.1px;font-size:8.7px;color:#221e2e;transform:scaleX(0.844);transform-origin:0 0">RIGHT</div>
<div class="t" style="left:56px;top:225.7px;font-size:8.7px;color:#221e2e;transform:scaleX(0.870);transform-origin:0 0">TOP</div>
<div class="t" style="left:56px;top:238.2px;font-size:8.7px;color:#221e2e;transform:scaleX(0.854);transform-origin:0 0">FRONT</div>
<div class="t" style="left:56px;top:250.8px;font-size:8.7px;color:#221e2e;transform:scaleX(0.802);transform-origin:0 0">PRT_CSYS_DEF</div>
<div class="t" style="left:56px;top:263.4px;font-size:8.7px;color:#221e2e;transform:scaleX(0.882);transform-origin:0 0">Sketch 1</div>
<div class="t" style="left:56px;top:276.0px;font-size:8.7px;color:#221e2e;transform:scaleX(0.867);transform-origin:0 0">Extrude 1</div>
<div class="t" style="left:56px;top:288.6px;font-size:8.7px;color:#221e2e;transform:scaleX(0.893);transform-origin:0 0">Draft 1</div>
<div class="t" style="left:56px;top:301.1px;font-size:8.7px;color:#221e2e;transform:scaleX(0.923);transform-origin:0 0">Insert Here</div>
<div class="t" style="left:62.3px;top:313.7px;font-size:8.7px;color:#221e2e;transform:scaleX(0.888);transform-origin:0 0">Sketch 2</div>
<svg class="a" style="left:24px;top:140px" width="107" height="200" viewBox="24 140 107 200">
<rect x="32.3" y="147" width="2.8" height="2.8" fill="#fff" stroke="#111" stroke-width="0.9"/>
<rect x="32.3" y="152.2" width="2.8" height="2.8" fill="#fff" stroke="#111" stroke-width="0.9"/>
<rect x="37.4" y="152.2" width="2.8" height="2.8" fill="#fff" stroke="#111" stroke-width="0.9"/>
<rect x="32.3" y="157.2" width="2.8" height="2.8" fill="#fff" stroke="#111" stroke-width="0.9"/>
<path d="M52.3 148h2.5l1 1h4.0v4.5h-7.5z" fill="#f0e060" stroke="#9a8a30" stroke-width="0.6"/>
<rect x="52.3" y="149.6" width="7.5" height="3.9" fill="#f8ec70" stroke="#9a8a30" stroke-width="0.6"/>
<path d="M54.3 151.5h2.5l1 1h4.0v4.5h-7.5z" fill="#f0e060" stroke="#9a8a30" stroke-width="0.6"/>
<rect x="54.3" y="153.1" width="7.5" height="3.9" fill="#f8ec70" stroke="#9a8a30" stroke-width="0.6"/>
<path d="M57 155h2.5l1 1h4.0v4.5h-7.5z" fill="#f0e060" stroke="#9a8a30" stroke-width="0.6"/>
<rect x="57" y="156.6" width="7.5" height="3.9" fill="#f8ec70" stroke="#9a8a30" stroke-width="0.6"/>
<path d="M75 150.5h2.5l1 1h7.5v8h-11z" fill="#f0e060" stroke="#9a8a30" stroke-width="0.6"/>
<rect x="75" y="152.1" width="11" height="7.4" fill="#f8ec70" stroke="#9a8a30" stroke-width="0.6"/>
<path d="M80.5 153.6l0.7 1.5 1.6.2-1.2 1.1.4 1.6-1.5-.8-1.5.8.4-1.6-1.2-1.1 1.6-.2z" fill="#2a40d0"/>
<path d="M96.3 152.5h2.5l1 1h5.0v7h-8.5z" fill="#f0e060" stroke="#9a8a30" stroke-width="0.6"/>
<rect x="96.3" y="154.1" width="8.5" height="6.4" fill="#f8ec70" stroke="#9a8a30" stroke-width="0.6"/>
<path d="M100 149.2l7.5-1.6 1 1.6-7.5 1.8z" fill="#8aa4b8" stroke="#3a4a5a" stroke-width="0.6"/>
<path d="M104.5 149.5l-3.5 12" stroke="#5a4a3a" stroke-width="1.3"/>
<path d="M107.8 151l3 5.5" stroke="#c81818" stroke-width="1.8"/><path d="M105.8 148l2 3" stroke="#444" stroke-width="0.9"/>
<path d="M34.5 212v108.5" stroke="#a8a8a8" stroke-width="0.8" stroke-dasharray="1.2 1.2"/>
<path d="M34.5 217.98h7.5" stroke="#a8a8a8" stroke-width="0.8" stroke-dasharray="1.2 1.2"/>
<path d="M34.5 230.55999999999997h7.5" stroke="#a8a8a8" stroke-width="0.8" stroke-dasharray="1.2 1.2"/>
<path d="M34.5 243.14h7.5" stroke="#a8a8a8" stroke-width="0.8" stroke-dasharray="1.2 1.2"/>
<path d="M34.5 255.71999999999997h7.5" stroke="#a8a8a8" stroke-width="0.8" stroke-dasharray="1.2 1.2"/>
<path d="M34.5 268.29999999999995h7.5" stroke="#a8a8a8" stroke-width="0.8" stroke-dasharray="1.2 1.2"/>
<path d="M38 280.88h4" stroke="#a8a8a8" stroke-width="0.8" stroke-dasharray="1.2 1.2"/>
<path d="M34.5 293.46h7.5" stroke="#a8a8a8" stroke-width="0.8" stroke-dasharray="1.2 1.2"/>
<path d="M34.5 306.03999999999996h7.5" stroke="#a8a8a8" stroke-width="0.8" stroke-dasharray="1.2 1.2"/>
<path d="M34.5 318.61999999999995h7.5" stroke="#a8a8a8" stroke-width="0.8" stroke-dasharray="1.2 1.2"/>
<path d="M29.5 203.2h7.2v6.3h-7.2z" fill="#80eef0" stroke="#5a8a90" stroke-width="0.6"/><path d="M36.7 203.2l1.6-1.2v6.3l-1.6 1.2z" fill="#2a8a90"/><path d="M29.5 203.2l1.6-1.2h7.2l-1.6 1.2z" fill="#b8f6f6"/>
<path d="M45.8 214.98h6.8l-3.3 6h-6.8z" fill="none" stroke="#a8602a" stroke-width="1.1"/>
<path d="M45.8 227.55999999999997h6.8l-3.3 6h-6.8z" fill="none" stroke="#a8602a" stroke-width="1.1"/>
<path d="M45.8 240.14h6.8l-3.3 6h-6.8z" fill="none" stroke="#a8602a" stroke-width="1.1"/>
<path d="M43 255.71999999999997h8.5M44.5 251.21999999999997l5.5 9M50 251.21999999999997l-5.5 9" stroke="#a8602a" stroke-width="0.9"/>
<text x="42.2" y="252.51999999999998" font-size="3.8" fill="#777" font-family="Liberation Sans">y</text><text x="42.2" y="260.71999999999997" font-size="3.8" fill="#777" font-family="Liberation Sans">z</text><text x="51.4" y="257.32" font-size="4" fill="#555" font-family="Liberation Sans">x</text>
<rect x="42.5" y="263.79999999999995" width="10" height="9" fill="none" stroke="#c8c8b8" stroke-width="0.7" stroke-dasharray="1 1.2"/>
<path d="M43 272.29999999999995q4.5-10 9.5 0" fill="none" stroke="#b0b098" stroke-width="0.9"/>
<rect x="31.5" y="277.88" width="6" height="6" fill="#fff" stroke="#9a9aa8" stroke-width="0.7"/><path d="M32.9 280.88h3.2M34.5 279.28v3.2" stroke="#3a4aa0" stroke-width="0.7"/>
<path d="M43.5 280.38h5v5h-5z" fill="#78e0e6" stroke="#3a8a90" stroke-width="0.6"/><path d="M46.5 280.88l5-4.5M49 276.08h3v3" fill="none" stroke="#2a4a60" stroke-width="0.9"/>
<path d="M43.5 291.96l4-3.5 4.5 3v5l-3.5 3-5-1.5z" fill="#8ae6ea" stroke="#3a9aa0" stroke-width="0.7"/><path d="M47.5 288.46l1 8" stroke="#3a9aa0" stroke-width="0.6"/>
<path d="M45 304.84h3v-2.3l3.6 3.5-3.6 3.5v-2.3h-3z" fill="#d01010" stroke="#600808" stroke-width="0.5"/>
<rect x="42.8" y="313.81999999999994" width="9.8" height="9.6" fill="none" stroke="#4a6ad8" stroke-width="0.7" stroke-dasharray="1 1.2"/>
<path d="M43.2 322.61999999999995q4.5-10 9 0" fill="none" stroke="#1a70e0" stroke-width="1.1"/>
<path d="M58 315.41999999999996v5M55.5 317.91999999999996h5M56.3 316.11999999999995l3.4 3.6M59.7 316.11999999999995l-3.4 3.6" stroke="#c8c800" stroke-width="0.9"/><circle cx="58" cy="317.91999999999996" r="1.2" fill="#f0f000"/>
</svg>

<div class="a" style="left:568px;top:143px;width:59px;height:366px;background:linear-gradient(90deg,#fcfcfe 0%,#eef0f8 25%,#e4e7f4 39%,#dce1f1 40%,#dde2f2 100%)"></div>
<svg class="a" style="left:568px;top:143px" width="59" height="366" viewBox="568 143 59 366">
<rect x="569.5" y="143.6" width="1.2" height="1.1" fill="#a8adba"/><rect x="570.6" y="144.7" width="1" height="0.9" fill="#fff"/>
<rect x="573.1" y="143.6" width="1.2" height="1.1" fill="#a8adba"/><rect x="574.2" y="144.7" width="1" height="0.9" fill="#fff"/>
<rect x="576.7" y="143.6" width="1.2" height="1.1" fill="#a8adba"/><rect x="577.8000000000001" y="144.7" width="1" height="0.9" fill="#fff"/>
<rect x="580.3000000000001" y="143.6" width="1.2" height="1.1" fill="#a8adba"/><rect x="581.4000000000001" y="144.7" width="1" height="0.9" fill="#fff"/>
<rect x="583.9000000000001" y="143.6" width="1.2" height="1.1" fill="#a8adba"/><rect x="585.0000000000001" y="144.7" width="1" height="0.9" fill="#fff"/>
<rect x="587.5000000000001" y="143.6" width="1.2" height="1.1" fill="#a8adba"/><rect x="588.6000000000001" y="144.7" width="1" height="0.9" fill="#fff"/>
<rect x="591.1000000000001" y="143.6" width="1.2" height="1.1" fill="#a8adba"/><rect x="592.2000000000002" y="144.7" width="1" height="0.9" fill="#fff"/>
<rect x="594.7000000000002" y="143.6" width="1.2" height="1.1" fill="#a8adba"/><rect x="595.8000000000002" y="144.7" width="1" height="0.9" fill="#fff"/>
<rect x="598.3000000000002" y="143.6" width="1.2" height="1.1" fill="#a8adba"/><rect x="599.4000000000002" y="144.7" width="1" height="0.9" fill="#fff"/>
<rect x="601.9000000000002" y="143.6" width="1.2" height="1.1" fill="#a8adba"/><rect x="603.0000000000002" y="144.7" width="1" height="0.9" fill="#fff"/>
<rect x="605.5000000000002" y="143.6" width="1.2" height="1.1" fill="#a8adba"/><rect x="606.6000000000003" y="144.7" width="1" height="0.9" fill="#fff"/>
<rect x="609.1000000000003" y="143.6" width="1.2" height="1.1" fill="#a8adba"/><rect x="610.2000000000003" y="144.7" width="1" height="0.9" fill="#fff"/>
<rect x="612.7000000000003" y="143.6" width="1.2" height="1.1" fill="#a8adba"/><rect x="613.8000000000003" y="144.7" width="1" height="0.9" fill="#fff"/>
<rect x="616.3000000000003" y="143.6" width="1.2" height="1.1" fill="#a8adba"/><rect x="617.4000000000003" y="144.7" width="1" height="0.9" fill="#fff"/>
<rect x="619.9000000000003" y="143.6" width="1.2" height="1.1" fill="#a8adba"/><rect x="621.0000000000003" y="144.7" width="1" height="0.9" fill="#fff"/>
<rect x="623.5000000000003" y="143.6" width="1.2" height="1.1" fill="#a8adba"/><rect x="624.6000000000004" y="144.7" width="1" height="0.9" fill="#fff"/>
<path d="M575.2 152.2v8.6l2.2-2 1.8 3.4 1.5-.8-1.8-3.3h3z" fill="#10209a" stroke="#10209a" stroke-width="0.5" stroke-linejoin="round"/>
<path d="M572.3 174.5q2-3.5 4.5-1.8M580.5 180q3 1.8 4.5-1.5M572.5 179.5q2.5 1.5 4-.5M581 173.5q2.5-1.5 4 .5" fill="none" stroke="#8a8a8a" stroke-width="0.8"/>
<path d="M573 172.3l11 8.6" stroke="#10209a" stroke-width="1.5"/>
<path d="M590.3000000000001 175.0h4.6l-2.3 2.6z" fill="#111"/>
<rect x="573.6" y="192.1" width="9.6" height="7.2" fill="none" stroke="#10209a" stroke-width="1.3"/>
<circle cx="578.4" cy="215.5" r="5" fill="none" stroke="#10209a" stroke-width="1.4"/>
<path d="M590.3000000000001 214.60000000000002h4.6l-2.3 2.6z" fill="#111"/>
<path d="M573.3 231.3q8.5 0.8 9.5 8.8" fill="none" stroke="#10209a" stroke-width="1.5"/>
<path d="M590.3000000000001 234.4h4.6l-2.3 2.6z" fill="#111"/>
<path d="M575.5 249.5v12M570.5 256h9" stroke="#777" stroke-width="0.8" stroke-dasharray="1.2 1"/><path d="M582 248.5v3.5M580.2 250.2h3.6" stroke="#888" stroke-width="0.7"/>
<path d="M577.5 249.5q-2 5.5 5.5 7" fill="none" stroke="#10209a" stroke-width="1.5"/><circle cx="582.8" cy="256.5" r="0.9" fill="#30e0f0"/>
<path d="M590.3000000000001 253.20000000000002h4.6l-2.3 2.6z" fill="#111"/>
<path d="M572.7 274.5q1.5-5 4-2.5t2.5 3q2.5 2.5 5.2-1.5" fill="none" stroke="#10209a" stroke-width="1.5"/><circle cx="572.8" cy="274.3" r="0.9" fill="#30e0f0"/><circle cx="584.3" cy="273.8" r="0.9" fill="#30e0f0"/>
<path d="M576.4 291.6l4 4M580.4 291.6l-4 4" stroke="#10209a" stroke-width="1.5"/>
<path d="M590.3000000000001 292.40000000000003h4.6l-2.3 2.6z" fill="#111"/>
<rect x="569.7" y="305.6" width="18" height="16.8" rx="1.5" fill="#d9dce5" stroke="#7b7f87" stroke-width="1"/>
<rect x="570.8" y="306.7" width="15.8" height="14.6" rx="1" fill="none" stroke="#eceef4" stroke-width="0.7"/>
<rect x="578.5" y="308.3" width="5.6" height="5.6" fill="#e8e8ea" stroke="#8a8a90" stroke-width="0.8"/>
<path d="M574.3 310.8v7.6h7.6M576.8 310.8v5.1h5.1" fill="none" stroke="#10209a" stroke-width="1.3"/>
<path d="M590.0 312.7h4.6l-2.3 2.6z" fill="#111"/>
<path d="M572.8 328v9M584.3 328v9M573.5 331h10" stroke="#10209a" stroke-width="1.2"/><path d="M573.2 331l2.3-1.6v3.2zM583.8 331l-2.3-1.6v3.2z" fill="#10209a"/>
<path d="M573 347.2h11.5M584.3 344.8v4.5M581 344.8v4.5" stroke="#10209a" stroke-width="1"/><path d="M572.8 358.3h2.5l6.5-5.3" fill="none" stroke="#10209a" stroke-width="1.3"/><path d="M580 353.8l4.5-2.2" stroke="#8aa" stroke-width="1.1"/><circle cx="584.8" cy="351.8" r="1" fill="#30d0f0"/>
<rect x="573.6" y="365.6" width="10" height="10.8" fill="#fafafa" stroke="#10209a" stroke-width="0.9"/><rect x="573.6" y="365.6" width="10" height="1.8" fill="#10209a"/><path d="M575.5 370v3.5h2.3M579 374l3-3M580 374l3-3" stroke="#222" stroke-width="0.7"/>
<path d="M572.5 386.8h2.2M573.6 386.8v9M572.5 395.8h2.2" stroke="#888" stroke-width="0.8"/><rect x="572" y="395.5" width="2" height="2" fill="#30b0f0"/>
<path d="M575 397l4.8-10.5 5 10.5M576.8 393h6" fill="none" stroke="#10209a" stroke-width="1.3" stroke-linejoin="round"/><path d="M577.5 396.8l2.3-5.5 2.5 5.5" fill="none" stroke="#c8d0f0" stroke-width="0.7"/>
<path d="M571.6 409.5q1-4 6.5-3.5q7.5 1 7.3 6.5q-.3 5-6.5 4.6q-8-.5-7.3-7.6z" fill="#d6d2c4" stroke="#10209a" stroke-width="1.1"/><circle cx="580.5" cy="410.3" r="1.3" fill="none" stroke="#2a5ad0" stroke-width="0.8"/>
<path d="M574.5 425q-3 1.5-.5 3.5q2 1.5-1 3.3q-2.5 1.5.5 3" fill="none" stroke="#c02020" stroke-width="1"/><path d="M570.5 431.5h4" stroke="#888" stroke-width="0.7" stroke-dasharray="1 1"/>
<path d="M578.3 426v11.5M578.3 432h7" stroke="#10209a" stroke-width="1.5"/><path d="M585 424.5l-5 4.5" stroke="#111" stroke-width="1"/><path d="M579 429.8l3.6-.6-2-2.2z" fill="#111"/>
<path d="M590.0 430.1h4.6l-2.3 2.6z" fill="#111"/>
<path d="M575.5 444.5v13" stroke="#b8b8b8" stroke-width="0.9" stroke-dasharray="1.6 1.2"/><path d="M578.5 447.5l4-1.8v9l-4 1.5z" fill="#f0f0f0" stroke="#a8a8a8" stroke-width="0.8"/>
<path d="M590.0 449.40000000000003h4.6l-2.3 2.6z" fill="#111"/>
<path d="M572.2 469.5l3.5 3.8 7.5-7.5" fill="none" stroke="#10209a" stroke-width="2"/>
<path d="M573.5 485l8.5 8.5M582 485l-8.5 8.5" stroke="#10209a" stroke-width="1.6"/>
<rect x="602.4" y="150.3" width="11.6" height="12.8" fill="none" stroke="#c0c4cc" stroke-width="0.8" stroke-dasharray="1 1.3"/>
<path d="M602.5 158q2.5-5 5-1.5t5.5 1" fill="none" stroke="#9a9aa0" stroke-width="1"/>
<path d="M604.7 172.5h9.5l-4.4 7.9h-9z" fill="none" stroke="#a8602a" stroke-width="1.3"/>
<path d="M610.6 189.1l-6.3 13.2" stroke="#a8602a" stroke-width="1.3" stroke-dasharray="3 1.6"/>
<path d="M601.2 218.2q2.5-4.8 5-2.5q2.5 2 4-1.5q1.2-2.3 4.3-2.3" fill="none" stroke="#a8602a" stroke-width="1.3"/>
<path d="M605.9 230.20000000000002l3.4 3.4M609.3000000000001 230.20000000000002l-3.4 3.4" stroke="#a8602a" stroke-width="1.1"/>
<path d="M602.0 237.10000000000002l3.4 3.4M605.4000000000001 237.10000000000002l-3.4 3.4" stroke="#a8602a" stroke-width="1.1"/>
<path d="M608.9 235.20000000000002l3.4 3.4M612.3000000000001 235.20000000000002l-3.4 3.4" stroke="#a8602a" stroke-width="1.1"/>
<path d="M619.5 234.20000000000002h4.6l-2.3 2.6z" fill="#111"/>
<path d="M601 255h10M602.5 249.5l6 11M608.5 249.5l-6 11" stroke="#a8602a" stroke-width="1"/>
<text x="600.3" y="250.6" font-size="4.5" fill="#666" font-family="Liberation Sans">y</text><text x="600" y="261.5" font-size="4.5" fill="#666" font-family="Liberation Sans">z</text><text x="611.3" y="257.5" font-size="5" fill="#555" font-family="Liberation Sans">x</text>
<path d="M603.8 271.0l3 3M606.8 271.0l-3 3" stroke="#a8602a" stroke-width="1"/>
<path d="M608.0 270.0l3 3M611.0 270.0l-3 3" stroke="#a8602a" stroke-width="1"/>
<path d="M607.5 267.3l1.2 1.6" stroke="#a8602a" stroke-width="1"/>
<rect x="601.3" y="276.4" width="12.2" height="4.4" fill="#e8e070" stroke="#9a9a70" stroke-width="0.6"/><path d="M603.5 278.5v1.8M606 278.5v1.8M608.5 278.5v1.8M611 278.5v1.8" stroke="#555" stroke-width="0.5"/>
<path d="M601.5 297.5l3-3M606.5 292.5l3-3M610.5 289l3.2-2.5" stroke="#c0c0c0" stroke-width="2.6" stroke-linecap="round"/><path d="M601.5 297.5l3-3M606.5 292.5l3-3M610.5 289l3.2-2.5" stroke="#fafafa" stroke-width="1" stroke-linecap="round"/>
</svg>

<div class="a" style="left:24px;top:509px;width:603px;height:18px;background:#efefef"></div>
<div class="a" style="left:405px;top:509.5px;width:1px;height:17.5px;background:#a8a8a8;box-shadow:1px 0 0 #fafafa"></div>
<div class="a" style="left:474.1px;top:511.4px;width:111.1px;height:15.7px;border:1px solid #8c8c8c;border-radius:2.5px;background:linear-gradient(#f4f4f4 0%,#eeeeee 45%,#dedede 52%,#d6d6d6 100%);box-shadow:inset 0 0 0 1px #fbfbfb"></div>
<div class="t" style="left:478.5px;top:514.6px;font-size:9px;color:#3a3a60;transform:scaleX(0.82);transform-origin:0 0">All</div>
<svg class="a" style="left:574px;top:519px" width="7" height="5" viewBox="0 0 7 5"><path d="M0.8 0.8h5l-2.5 2.8z" fill="#111"/></svg>
<div class="a" style="left:587.3px;top:510px;width:1px;height:16px;background:#c8c8c8;box-shadow:1px 0 0 #fafafa"></div>
<svg class="a" style="left:590px;top:510px" width="12" height="17" viewBox="590 510 12 17">
<circle cx="596.1" cy="512.8" r="1.3" fill="none" stroke="#999" stroke-width="0.7"/><circle cx="596.1" cy="516.6" r="1.3" fill="none" stroke="#999" stroke-width="0.7"/><circle cx="596.1" cy="521.3" r="2.3" fill="#ddd" stroke="#8a8a8a" stroke-width="0.8"/>
</svg>

<div class="a" style="left:471.5px;top:117.5px;width:93px;height:104px;border:1px solid #737b84;border-radius:4px 4px 1px 1px;background:linear-gradient(#c2d3e5 0%,#cfdced 20%,#d6e3f1 100%);box-shadow:inset 0 0 0 1px #e4edf6"></div>
<div class="a" style="left:477px;top:137px;width:81.5px;height:79.2px;background:#f0f0f0"></div>
<div class="a" style="left:479.2px;top:125.2px;width:8.7px;height:8.7px;background:linear-gradient(135deg,#8ff0f0,#36c8cc);border:1px solid #1e2a30;border-radius:1px;box-shadow:inset -1px -1px 0 #2a9aa0"></div>
<div class="t" style="left:492.2px;top:124.7px;font-size:8.6px;color:#55546e;transform:scaleX(0.96);transform-origin:0 0">Type</div>
<div class="a" style="left:538px;top:124.7px;width:19.2px;height:10px;border:1px solid #a2adbb;border-radius:2px;background:linear-gradient(#e4ebf4,#d2dce8)"></div>
<svg class="a" style="left:542px;top:125.5px" width="11" height="9" viewBox="0 0 11 9"><path d="M3.3 2.2l4.6 4.6M7.9 2.2l-4.6 4.6" stroke="#6a6a72" stroke-width="2.6" stroke-linecap="round"/><path d="M3.3 2.2l4.6 4.6M7.9 2.2l-4.6 4.6" stroke="#f4f4f4" stroke-width="1.1" stroke-linecap="round"/></svg>
<div class="a" style="left:479.2px;top:143.4px;width:78.3px;height:48px;border:1px solid #dcdcdc;border-radius:2px;box-shadow:inset 1px 1px 0 #fafafa"></div>
<div class="a" style="left:488.5px;top:139px;width:66px;height:8px;background:#f0f0f0"></div>
<div class="t" style="left:490.8px;top:139px;font-size:8.4px;color:#24202e;transform:scaleX(0.875);transform-origin:0 0">Select Offset Edge</div>
<svg class="a" style="left:480px;top:148px" width="20" height="40" viewBox="480 148 20 40">
<defs><radialGradient id="rg" cx="0.4" cy="0.35" r="0.7"><stop offset="0" stop-color="#ffffff"/><stop offset="1" stop-color="#d0d0d0"/></radialGradient><radialGradient id="rb" cx="0.4" cy="0.35" r="0.7"><stop offset="0" stop-color="#6ac0f0"/><stop offset="1" stop-color="#0a4a8a"/></radialGradient></defs>
<circle cx="490.6" cy="156.8" r="3.9" fill="url(#rg)" stroke="#8e8f8f" stroke-width="0.8"/>
<circle cx="490.6" cy="168.5" r="3.9" fill="url(#rg)" stroke="#8e8f8f" stroke-width="0.8"/>
<circle cx="490.6" cy="180.7" r="3.9" fill="url(#rg)" stroke="#8e8f8f" stroke-width="0.8"/>
<circle cx="490.6" cy="180.7" r="2.6" fill="url(#rb)"/>
</svg>
<div class="t" style="left:498.6px;top:152.4px;font-size:8.6px;color:#221e2e;transform:scaleX(0.83);transform-origin:0 0">Single</div>
<div class="t" style="left:498.6px;top:164.6px;font-size:8.6px;color:#221e2e;transform:scaleX(0.86);transform-origin:0 0">Chain</div>
<div class="t" style="left:498.6px;top:176.4px;font-size:8.6px;color:#221e2e;transform:scaleX(0.9);transform-origin:0 0">Loop</div>
<div class="a" style="left:482px;top:200px;width:72px;height:13px;border:1px solid #3c7fb1;border-radius:2px;background:linear-gradient(#f2f2f2 0%,#ebebeb 48%,#dddddd 52%,#cfcfcf 100%);box-shadow:inset 0 0 0 1px #bde6fa"></div>
<div class="t" style="left:507px;top:202.7px;font-size:8.6px;color:#2a2535;transform:scaleX(0.86);transform-origin:0 0">Close</div>

<svg class="a" style="left:0;top:0" width="652" height="547" viewBox="0 0 652 547">
<path d="M480.1 352.1L411.9 318.6" stroke="#ff00ff" stroke-width="3" stroke-linecap="butt"/>
<path d="M403.9 314.6L414.2 314.2L409.6 323.0Z" fill="#ff00ff"/>
<path d="M421.4 155.4L471.6 175.2" stroke="#00b050" stroke-width="3" stroke-linecap="butt"/>
<path d="M480 178L473.5 170.6L469.8 179.8Z" fill="#00b050"/>
<path d="M511.4 288.7L555.8 305.4" stroke="#ff0000" stroke-width="3" stroke-linecap="butt"/>
<path d="M564.3 308.1L557.6 300.9L553.9 309.9Z" fill="#ff0000"/>
</svg>

</body></html>
